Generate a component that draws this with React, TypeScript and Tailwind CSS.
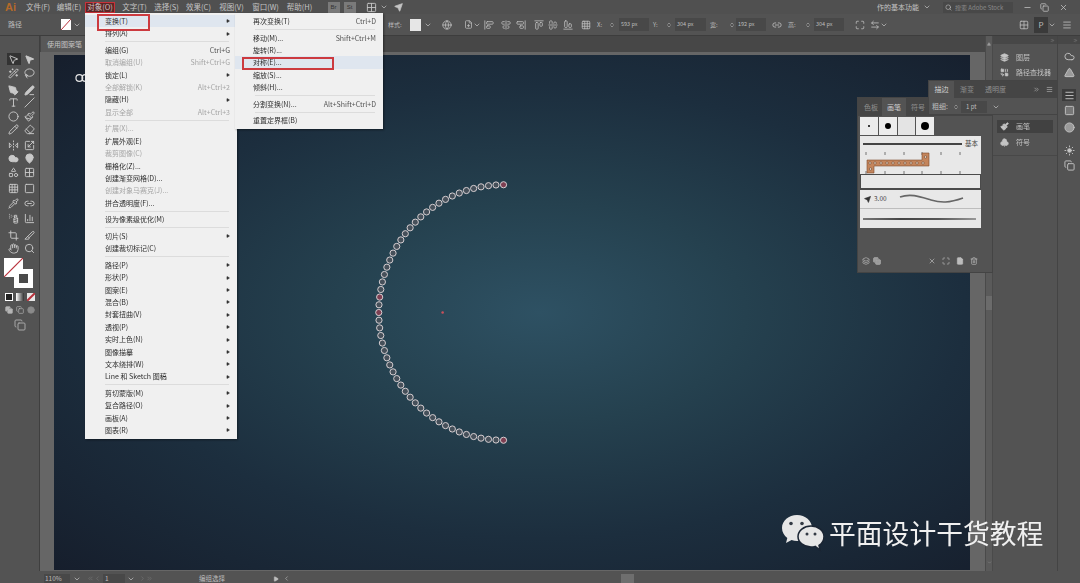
import React from "react";
import {
  AlignCenterHorizontal,
  AlignCenterVertical,
  AlignEndHorizontal,
  AlignEndVertical,
  AlignStartHorizontal,
  AlignStartVertical,
  ArrowLeftRight,
  ChartColumn,
  ChevronDown,
  ChevronLeft,
  ChevronRight,
  ChevronsLeft,
  ChevronsRight,
  ChevronsUpDown,
  Circle,
  Cloud,
  Club,
  Combine,
  Copy,
  Crop,
  Eraser,
  FilePlus,
  FlipHorizontal2,
  Globe,
  Grid2x2,
  Grid3x3,
  Hand,
  Layers,
  Lasso,
  Link2,
  MapPin,
  Maximize,
  Menu,
  Minus,
  MousePointer2,
  PenLine,
  PenTool,
  Pencil,
  Paintbrush,
  Pipette,
  Play,
  Scaling,
  Search,
  Send,
  Shapes,
  Slash,
  Slice,
  SprayCan,
  Square,
  Sun,
  Trash2,
  Triangle,
  Type,
  Wand2,
  X,
} from "lucide-react";

type MenuEntry =
  | { sep: true }
  | { label: string; shortcut?: string; arrow?: boolean; dim?: boolean; hover?: boolean };

const mainMenu: MenuEntry[] = [
  { label: "变换(T)", arrow: true, hover: true },
  { label: "排列(A)", arrow: true },
  { sep: true },
  { label: "编组(G)", shortcut: "Ctrl+G" },
  { label: "取消编组(U)", shortcut: "Shift+Ctrl+G", dim: true },
  { label: "锁定(L)", arrow: true },
  { label: "全部解锁(K)", shortcut: "Alt+Ctrl+2", dim: true },
  { label: "隐藏(H)", arrow: true },
  { label: "显示全部", shortcut: "Alt+Ctrl+3", dim: true },
  { sep: true },
  { label: "扩展(X)...", dim: true },
  { label: "扩展外观(E)" },
  { label: "裁剪图像(C)", dim: true },
  { label: "栅格化(Z)..." },
  { label: "创建渐变网格(D)..." },
  { label: "创建对象马赛克(J)...", dim: true },
  { label: "拼合透明度(F)..." },
  { sep: true },
  { label: "设为像素级优化(M)" },
  { sep: true },
  { label: "切片(S)", arrow: true },
  { label: "创建裁切标记(C)" },
  { sep: true },
  { label: "路径(P)", arrow: true },
  { label: "形状(P)", arrow: true },
  { label: "图案(E)", arrow: true },
  { label: "混合(B)", arrow: true },
  { label: "封套扭曲(V)", arrow: true },
  { label: "透视(P)", arrow: true },
  { label: "实时上色(N)", arrow: true },
  { label: "图像描摹", arrow: true },
  { label: "文本绕排(W)", arrow: true },
  { label: "Line 和 Sketch 图稿", arrow: true },
  { sep: true },
  { label: "剪切蒙版(M)", arrow: true },
  { label: "复合路径(O)", arrow: true },
  { label: "画板(A)", arrow: true },
  { label: "图表(R)", arrow: true },
];

const subMenu: MenuEntry[] = [
  { label: "再次变换(T)", shortcut: "Ctrl+D" },
  { sep: true },
  { label: "移动(M)...", shortcut: "Shift+Ctrl+M" },
  { label: "旋转(R)..." },
  { label: "对称(E)...", hover: true },
  { label: "缩放(S)..." },
  { label: "倾斜(H)..." },
  { sep: true },
  { label: "分割变换(N)...", shortcut: "Alt+Shift+Ctrl+D" },
  { sep: true },
  { label: "重置定界框(B)" },
];

const toolRows = [
  { gap: "mt-0", a: MousePointer2, b: MousePointer2, filled: true },
  { gap: "mt-[2px]", a: Wand2, b: Lasso },
  { gap: "mt-[5px]", a: PenTool, b: PenLine, filled: true },
  { gap: "mt-0", a: Type, b: Slash },
  { gap: "mt-[2px]", a: Circle, b: Paintbrush },
  { gap: "mt-px", a: Pencil, b: Eraser },
  { gap: "mt-[4px]", a: FlipHorizontal2, b: Scaling },
  { gap: "mt-px", a: Cloud, b: MapPin, filled: true },
  { gap: "mt-[2px]", a: Shapes, b: Grid2x2 },
  { gap: "mt-[4px]", a: Grid3x3, b: Square },
  { gap: "mt-[3px]", a: Pipette, b: Link2 },
  { gap: "mt-[3px]", a: SprayCan, b: ChartColumn },
  { gap: "mt-[5px]", a: Crop, b: Slice },
  { gap: "mt-px", a: Hand, b: Search },
];

const arcDots = Array.from({ length: 53 }, (_, i) => {
  const t = (Math.PI * i) / 52;
  return { x: 504 - 125 * Math.sin(t), y: 185 + 128 * (1 - Math.cos(t)), pink: i === 0 || i === 52 || i === 24 || i === 26 };
});

const MenuRows = ({ items, textLeft }: { items: MenuEntry[]; textLeft: string }) => (
  <>
    {items.map((item, i) =>
      "sep" in item ? (
        <div key={i} className="flex h-[4.2px] items-center pl-[20px] pr-[8px]">
          <div className="h-px w-full bg-[#dcdcdc]" />
        </div>
      ) : (
        <div
          key={i}
          className={`flex h-[12.4px] items-center pr-[7px] ${textLeft} ${item.hover ? "bg-[#dfe6ef]" : ""} ${
            item.dim ? "text-[#a6a6a6]" : "text-[#2e2e2e]"
          }`}
        >
          <span className="whitespace-nowrap">{item.label}</span>
          <span className={`ml-auto whitespace-nowrap ${item.dim ? "text-[#a6a6a6]" : "text-[#555555]"}`}>{item.shortcut}</span>
          {item.arrow && <Play size={4} className="ml-auto fill-[#333333] text-[#333333]" />}
        </div>
      ),
    )}
  </>
);

const TopItem = ({ label, className = "" }: { label: string; className?: string }) => (
  <span className={`flex w-[30px] items-center justify-center whitespace-nowrap ${className}`}>{label}</span>
);

const Chevron = ({ className = "" }: { className?: string }) => <ChevronDown size={8} className={`shrink-0 text-[#c8c8c8] ${className}`} />;

const NumField = ({ value, width }: { value: string; width: string }) => (
  <span className={`flex h-[13px] items-center bg-[#484848] pl-[2px] text-[5.5px] text-[#bdbdbd] ${width}`}>{value}</span>
);

const Spin = ({ className = "" }: { className?: string }) => (
  <ChevronsUpDown size={8} className={`w-[6px] shrink-0 text-[#c8c8c8] ${className}`} />
);

const Tools = () => (
  <div className="flex w-[40px] shrink-0 flex-col items-center border-r border-[#3f3f3f] bg-[#535353] pt-[17px]">
    <div className="w-[36px]">
      {toolRows.map((row, i) => {
        const A = row.a;
        const B = row.b;
        return (
          <div key={i} className={`flex h-[12px] items-center justify-between pl-[5px] pr-[1px] ${row.gap}`}>
            <span className={`flex h-[12px] w-[14px] items-center justify-center ${i === 0 ? "bg-[#333333]" : ""}`}>
              <A size={11} className={`text-[#c9c9c9] ${i === 0 ? "" : row.filled ? "fill-[#c9c9c9]" : ""}`} />
            </span>
            <span className="flex h-[12px] w-[14px] items-center justify-center">
              <B size={11} className={`text-[#c9c9c9] ${row.filled ? "fill-[#c9c9c9]" : ""}`} />
            </span>
          </div>
        );
      })}
    </div>

    {/* fill and stroke */}
    <div className="relative mt-[4px] h-[32px] w-[36px]">
      <svg className="absolute left-[2px] top-0 h-[19px] w-[19px]" viewBox="0 0 19 19">
        <rect width="19" height="19" fill="#ffffff" />
        <line x1="0" y1="19" x2="19" y2="0" stroke="#b8323c" strokeWidth="1.2" />
      </svg>
      <div className="absolute left-[12px] top-[11px] flex h-[19px] w-[19px] items-center justify-center bg-white">
        <div className="h-[9px] w-[9px] bg-[#4a4a4a]" />
      </div>
    </div>
    <div className="mt-[3px] flex w-[30px] justify-between">
      <span className="flex h-[8px] w-[8px] items-center justify-center border border-white bg-[#222222]" />
      <span className="h-[8px] w-[8px] bg-[linear-gradient(90deg,#ffffff,#333333)]" />
      <svg className="h-[8px] w-[8px]" viewBox="0 0 8 8">
        <rect width="8" height="8" fill="#e8e8e8" />
        <line x1="0" y1="8" x2="8" y2="0" stroke="#b8323c" strokeWidth="2" />
      </svg>
    </div>
    <div className="mt-[5px] flex w-[30px] justify-between text-[#b5b5b5]">
      <Copy size={8} className="fill-[#b5b5b5]" />
      <Copy size={8} />
      <Circle size={8} className="fill-[#8a8a8a] text-[#8a8a8a]" />
    </div>
    <Copy size={12} className="mt-[5px] text-[#a8a8a8]" />
  </div>
);

const ChainBand = () => (
  <svg className="h-[22px] w-full" viewBox="0 0 121 22">
    {[6, 25, 44, 62, 81, 100].map((x) => (
      <g key={x}>
        <line x1={x} y1="0" x2={x} y2="3" stroke="#555555" strokeWidth="0.8" />
        <line x1={x} y1="19" x2={x} y2="22" stroke="#555555" strokeWidth="0.8" />
      </g>
    ))}
    <path d="M7 8h55V1h7v13H14v7H7z" fill="#c4855c" stroke="#7d4a2c" strokeWidth="0.6" />
    {[10, 15, 21, 27, 33, 39, 45, 51, 57, 63].map((x) => (
      <circle key={x} cx={x} cy="11" r="1.2" fill="#f0dcc8" stroke="#4f3020" strokeWidth="0.5" />
    ))}
    <circle cx="65.5" cy="5" r="1.2" fill="#f0dcc8" stroke="#4f3020" strokeWidth="0.5" />
    <circle cx="10.5" cy="17" r="1.2" fill="#f0dcc8" stroke="#4f3020" strokeWidth="0.5" />
  </svg>
);

const BrushPanel = () => (
  <div className="absolute left-[857px] top-[97px] h-[176px] w-[136px] border border-[#444444] bg-[#535353] text-[7px] text-[#bdbdbd]">
    <div className="flex h-[18px] bg-[#454545] pl-[2px]">
      <span className="flex w-[22px] items-center justify-center text-[#8f8f8f]">色板</span>
      <span className="flex w-[24px] items-center justify-center bg-[#535353] text-[#d0d0d0]">画笔</span>
      <span className="flex w-[24px] items-center justify-center text-[#8f8f8f]">符号</span>
    </div>
    <div className="ml-[2px] mt-[1px] flex h-[18px] gap-px">
      <span className="flex w-[18px] items-center justify-center bg-[#ececec]">
        <span className="h-[2px] w-[2px] rounded-full bg-black" />
      </span>
      <span className="flex w-[18px] items-center justify-center bg-[#ececec]">
        <span className="h-[6px] w-[6px] rounded-full bg-black" />
      </span>
      <span className="w-[17px] bg-[#e4e4e4]" />
      <span className="flex w-[18px] items-center justify-center bg-[#ececec]">
        <span className="h-[8px] w-[8px] rounded-full bg-black" />
      </span>
    </div>
    <div className="ml-[2px] mt-px w-[121px] bg-[#e8e8e8]">
      <div className="flex h-[16px] items-center pl-[3px] pr-[2px] text-[#444444]">
        <span className="h-[1.5px] w-[99px] bg-[#444444]" />
        <span className="ml-[3px] text-[6.5px]">基本</span>
      </div>
      <ChainBand />
      <div className="h-[16px] border border-b-2 border-[#4a4a4a] bg-[#e8e8e8]" />
      <div className="flex h-[19px] items-center border-b border-[#bdbdbd] pl-[4px] text-[#444444]">
        <Send size={7} className="fill-[#333333] text-[#333333]" />
        <span className="ml-[3px] text-[6.5px]">3.00</span>
        <svg className="ml-[12px] h-[10px] w-[66px]" viewBox="0 0 66 10">
          <path d="M1 3C12 -1 22 3 32 6S50 9 64 4" fill="none" stroke="#666666" strokeWidth="1.6" />
        </svg>
      </div>
      <div className="flex h-[19px] items-center px-[3px]">
        <span className="h-[2px] w-[113px] bg-[linear-gradient(90deg,#777777,#444444,#555555,#999999)]" />
      </div>
    </div>
    <div className="mt-[29px] flex items-center pl-[4px] pr-[14px] text-[#bdbdbd]">
      <Layers size={8} />
      <Copy size={8} className="ml-[3px] fill-[#9a9a9a]" />
      <X size={8} className="ml-auto" />
      <Maximize size={8} className="ml-[6px]" />
      <FilePlus size={8} className="ml-[6px] fill-[#bdbdbd]" />
      <Trash2 size={8} className="ml-[6px]" />
    </div>
  </div>
);

const StrokePanel = () => (
  <div className="absolute left-[928px] top-[80px] h-[35px] w-[130px] border border-[#444444] bg-[#535353] text-[7px] text-[#bdbdbd]">
    <div className="flex h-[17px] items-center bg-[#454545]">
      <span className="flex h-full w-[25px] items-center justify-center bg-[#535353] text-[#d0d0d0]">描边</span>
      <span className="ml-[6px] text-[#8f8f8f]">渐变</span>
      <span className="ml-[11px] text-[#8f8f8f]">透明度</span>
      <ChevronsRight size={7} className="ml-auto" />
      <Menu size={7} className="ml-[6px] mr-[4px]" />
    </div>
    <div className="flex h-[17px] items-center pl-[3px]">
      <span>粗细:</span>
      <Spin className="ml-[5px]" />
      <span className="ml-[2px] flex h-[12px] w-[26px] items-center bg-[#484848] pl-[5px] text-[6px]">1 pt</span>
      <Chevron className="ml-[5px]" />
    </div>
  </div>
);

const DockRow = ({ icon: Icon, label, active }: { icon: typeof Layers; label: string; active?: boolean }) => (
  <div className={`mx-[4px] flex h-[13px] items-center gap-[7px] pl-[3px] text-[7px] text-[#c4c4c4] ${active ? "bg-[#414141]" : ""}`}>
    <Icon size={9} className="fill-[#c4c4c4] text-[#c4c4c4]" />
    <span className="whitespace-nowrap">{label}</span>
  </div>
);

const Docks = () => (
  <>
    <div className="flex w-[8px] shrink-0 flex-col items-center justify-between border-x border-[#4a4a4a] bg-[#5a5a5a] py-[6px]">
      <Triangle size={4} className="fill-[#9a9a9a] text-[#9a9a9a]" />
      <span className="h-[14px] w-[6px] bg-[#6b6b6b]" />
      <ChevronDown size={5} className="text-[#9a9a9a]" />
    </div>
    <div className="flex w-[65px] shrink-0 flex-col border-r border-[#444444] bg-[#535353]">
      <div className="flex h-[8px] items-center justify-end bg-[#474747] pr-[2px]">
        <ChevronsRight size={5} className="text-[#9a9a9a]" />
      </div>
      <div className="flex flex-col gap-[2px] pb-[1.5px] pt-[6.5px]">
        <DockRow icon={Layers} label="图层" />
        <DockRow icon={Combine} label="路径查找器" />
      </div>
      <div className="mt-[40px] flex flex-col gap-[3px]">
        <DockRow icon={Paintbrush} label="画笔" active />
        <DockRow icon={Club} label="符号" />
      </div>
      <div className="mt-[6px] border-t border-[#484848]" />
    </div>
    <div className="flex w-[22px] shrink-0 flex-col items-center bg-[#535353] text-[#c4c4c4]">
      <div className="flex h-[8px] w-full items-center justify-end bg-[#474747] pr-[2px]">
        <ChevronsRight size={5} className="text-[#9a9a9a]" />
      </div>
      <Cloud size={11} className="mt-[6.5px]" />
      <Triangle size={11} className="mt-[5px] fill-[#9a9a9a]" />
      <span className="mt-[11.5px] flex h-[12px] w-[14px] items-center justify-center bg-[#3c3c3c]">
        <Menu size={11} />
      </span>
      <Square size={11} className="mt-[3.5px] fill-[#777777]" />
      <Circle size={11} className="mt-[6px] fill-[#9a9a9a]" />
      <Sun size={11} className="mt-[12px] fill-[#c4c4c4]" />
      <Copy size={11} className="mt-[4px]" />
    </div>
  </>
);

const Artboard = () => (
  <div className="relative h-full w-full overflow-hidden bg-[radial-gradient(ellipse_at_53%_50%,#2e5163_0%,#25414f_30%,#1c2e3e_62%,#161e2c_100%)]">
    <svg className="absolute inset-0 h-full w-full" viewBox="55 55 915 516">
      <circle cx="79" cy="78" r="3.4" fill="none" stroke="#e6e6e6" strokeWidth="1.2" />
      <circle cx="85" cy="78" r="3.4" fill="none" stroke="#e6e6e6" strokeWidth="1.2" />
      {arcDots.map((d, i) => (
        <circle key={i} cx={d.x} cy={d.y} r="3.1" fill={d.pink ? "#7d3f52" : "#46505a"} stroke="#d6cfd2" strokeWidth="1" />
      ))}
      <circle cx="443" cy="313" r="1.3" fill="#c9505a" />
    </svg>
  </div>
);

const Watermark = () => (
  <div className="absolute left-[782px] top-[515px] flex items-center">
    <svg className="h-[37px] w-[42px]" viewBox="0 0 42 37">
      <path d="M15 0C6.7 0 0 5.8 0 13c0 4 2.1 7.6 5.3 10L4 28l5.6-2.9c1.7.5 3.5.9 5.4.9 8.3 0 15-5.8 15-13S23.3 0 15 0z" fill="#e6e6e6" />
      <path d="M29 11c-7.2 0-13 4.8-13 10.5S21.8 32 29 32c1.5 0 2.9-.2 4.2-.6L38 35l-1-4.6c3-1.900 5-5.100 5-8.900C42 15.8 36.2 11 29 11z" fill="#e6e6e6" stroke="#1a2432" strokeWidth="1.5" />
      <circle cx="9" cy="8.5" r="1.8" fill="#333a44" />
      <circle cx="20" cy="8.5" r="1.8" fill="#333a44" />
      <circle cx="25" cy="19" r="1.5" fill="#333a44" />
      <circle cx="33" cy="19" r="1.5" fill="#333a44" />
    </svg>
    <span className="ml-[5px] whitespace-nowrap text-[26.8px] leading-none text-[#f0f0f0]">平面设计干货教程</span>
  </div>
);

export default function App() {
  return (
    <div className="relative h-[583px] w-[1080px] overflow-hidden bg-[#535353] font-['Noto_Sans_CJK_SC','Liberation_Sans',sans-serif]">
      <div className="flex h-full flex-col blur-[0.35px]">
        {/* menu bar */}
        <div className="flex h-[14px] shrink-0 items-center bg-[#505050] text-[7.5px] text-[#c4c4c4]">
          <span className="ml-[5px] w-[10px] font-['Liberation_Sans',sans-serif] text-[11px] font-bold leading-none text-[#b4692a]">Ai</span>
          <TopItem label="文件(F)" className="ml-[8px]" />
          <TopItem label="编辑(E)" className="ml-px" />
          <TopItem label="对象(O)" className="ml-px h-[11px] border border-[#c8323a] bg-[#5e2626]" />
          <TopItem label="文字(T)" className="ml-[4.5px]" />
          <TopItem label="选择(S)" className="ml-[2px]" />
          <TopItem label="效果(C)" className="ml-[2px]" />
          <TopItem label="视图(V)" className="ml-[3px]" />
          <TopItem label="窗口(W)" className="ml-[4px]" />
          <TopItem label="帮助(H)" className="ml-[4px]" />
          <span className="ml-[13px] flex h-[11px] w-[12px] items-center justify-center bg-[#7a7a7a] font-['Liberation_Sans',sans-serif] text-[6px] text-[#333333]">Br</span>
          <span className="ml-[4px] flex h-[11px] w-[12px] items-center justify-center bg-[#7a7a7a] font-['Liberation_Sans',sans-serif] text-[6px] text-[#333333]">St</span>
          <Grid2x2 size={11} className="ml-[10px] text-[#c4c4c4]" />
          <Chevron className="ml-[3px]" />
          <Send size={9} className="ml-[6px] fill-[#c4c4c4] text-[#c4c4c4]" />
          <span className="ml-auto whitespace-nowrap text-[7px]">作的基本功能</span>
          <Chevron className="ml-[4px]" />
          <span className="ml-[12px] flex h-[11px] w-[70px] items-center bg-[#484848] pl-[2px] text-[6px] text-[#8a8a8a]">
            <Search size={7} className="mr-[3px] text-[#c4c4c4]" />
            搜索 Adobe Stock
          </span>
          <Minus size={9} className="ml-[10px]" />
          <Copy size={9} className="ml-[8px]" />
          <X size={9} className="ml-[10px] mr-[12px]" />
        </div>

        {/* control bar */}
        <div className="flex h-[22px] shrink-0 items-center border-b border-[#3d3d3d] bg-[#535353] text-[7px] text-[#bdbdbd]">
          <span className="ml-[8px] w-[14px] whitespace-nowrap">路径</span>
          <svg className="ml-[39px] h-[11px] w-[10px] shrink-0" viewBox="0 0 10 11">
            <rect width="10" height="11" fill="#ffffff" />
            <line x1="0" y1="11" x2="10" y2="0" stroke="#b8323c" strokeWidth="1" />
          </svg>
          <Chevron className="ml-[2px]" />
          <span className="ml-[307px] w-[12px] whitespace-nowrap text-[6px]">样式:</span>
          <span className="ml-[10px] h-[12px] w-[11px] shrink-0 bg-[#e6e6e6]" />
          <Chevron className="ml-[3px]" />
          <Globe size={10} className="ml-[10px] shrink-0" />
          <FilePlus size={9} className="ml-[12px] shrink-0" />
          <Chevron />
          <AlignStartVertical size={10} className="ml-[3px] shrink-0" />
          <AlignCenterVertical size={10} className="ml-[7px] shrink-0" />
          <AlignEndVertical size={10} className="ml-[5px] shrink-0" />
          <AlignStartHorizontal size={10} className="ml-[8px] shrink-0" />
          <AlignCenterHorizontal size={10} className="ml-[4px] shrink-0" />
          <AlignEndHorizontal size={10} className="ml-[5px] shrink-0" />
          <Grid3x3 size={10} className="ml-[8px] shrink-0" />
          <span className="ml-[6px] w-[6px] text-[6px]">X:</span>
          <Spin className="ml-[6px]" />
          <NumField value="593 px" width="ml-[4px] w-[30px]" />
          <span className="ml-[4px] w-[6px] text-[6px]">Y:</span>
          <Spin className="ml-[7px]" />
          <NumField value="304 px" width="ml-[3px] w-[31px]" />
          <span className="ml-[4px] w-[8px] text-[6px]">宽:</span>
          <Spin className="ml-[11px]" />
          <NumField value="192 px" width="ml-px w-[30px]" />
          <Link2 size={10} className="ml-[6px] shrink-0" />
          <span className="ml-[6px] w-[8px] text-[6px]">高:</span>
          <Spin className="ml-[9px]" />
          <NumField value="304 px" width="ml-[3px] w-[30px]" />
          <Maximize size={10} className="ml-[11px] shrink-0" />
          <ArrowLeftRight size={10} className="ml-[5px] shrink-0" />
          <Chevron />
          <Grid2x2 size={10} className="ml-[131px] shrink-0" />
          <span className="ml-[5px] flex h-[16px] w-[14px] items-center justify-center bg-[#3a3a3a] text-[8px]">P</span>
          <Chevron />
          <Menu size={10} className="ml-[6px] shrink-0" />
        </div>

        {/* workspace */}
        <div className="flex min-h-0 flex-1">
          <Tools />
          <div className="flex min-w-0 flex-1 flex-col">
            <div className="flex h-[16px] shrink-0 bg-[#474747]">
              <span className="ml-px flex w-[44px] items-center overflow-hidden whitespace-nowrap bg-[#585858] pl-[6px] text-[7px] text-[#c4c4c4]">使用图案笔</span>
            </div>
            <div className="min-h-0 flex-1 bg-[#666666] pb-px pl-[14px] pr-[15px] pt-[3px]">
              <Artboard />
            </div>
          </div>
          <Docks />
        </div>

        {/* status bar */}
        <div className="flex h-[12px] shrink-0 items-center bg-[#535353] pt-[3px] text-[6.5px] text-[#bdbdbd]">
          <span className="ml-[44px] flex h-[9px] w-[26px] items-center bg-[#484848] pl-px">110%</span>
          <Chevron className="ml-[3px]" />
          <ChevronsLeft size={7} className="ml-[6px] text-[#777777]" />
          <ChevronLeft size={7} className="text-[#777777]" />
          <span className="ml-[2px] flex h-[9px] w-[22px] items-center bg-[#484848] pl-[2px]">1</span>
          <Chevron className="ml-[2px]" />
          <ChevronRight size={7} className="ml-[4px] text-[#777777]" />
          <ChevronsRight size={7} className="text-[#777777]" />
          <span className="ml-[46px] w-[28px] whitespace-nowrap">编组选择</span>
          <Play size={6} className="ml-[46px] fill-[#bdbdbd]" />
          <ChevronLeft size={7} className="ml-[4px]" />
          <span className="ml-[331px] h-[9px] w-[13px] bg-[#6e6e6e]" />
        </div>
      </div>

      {/* floating panels */}
      <div className="absolute inset-0 blur-[0.35px]">
        <BrushPanel />
        <StrokePanel />

        {/* object menu */}
        <div className="absolute left-[85px] top-[13px] w-[152px] bg-[#f0f0f0] pb-[2px] pt-[2px] text-[7px] shadow-[1px_1px_2px_rgba(0,0,0,0.4)]">
          <MenuRows items={mainMenu} textLeft="pl-[20px]" />
        </div>

        {/* transform submenu */}
        <div className="absolute left-[235px] top-[13px] w-[148px] bg-[#f0f0f0] pb-[2px] pt-[2px] text-[7px] shadow-[1px_1px_2px_rgba(0,0,0,0.4)]">
          <MenuRows items={subMenu} textLeft="pl-[18px]" />
        </div>

        {/* red annotation boxes */}
        <div className="absolute left-[97px] top-[14px] h-[17px] w-[53px] border-2 border-[#cc3a3f]" />
        <div className="absolute left-[242px] top-[57px] h-[13px] w-[92px] border-2 border-[#cc3a3f]" />
      </div>

      <Watermark />
    </div>
  );
}
